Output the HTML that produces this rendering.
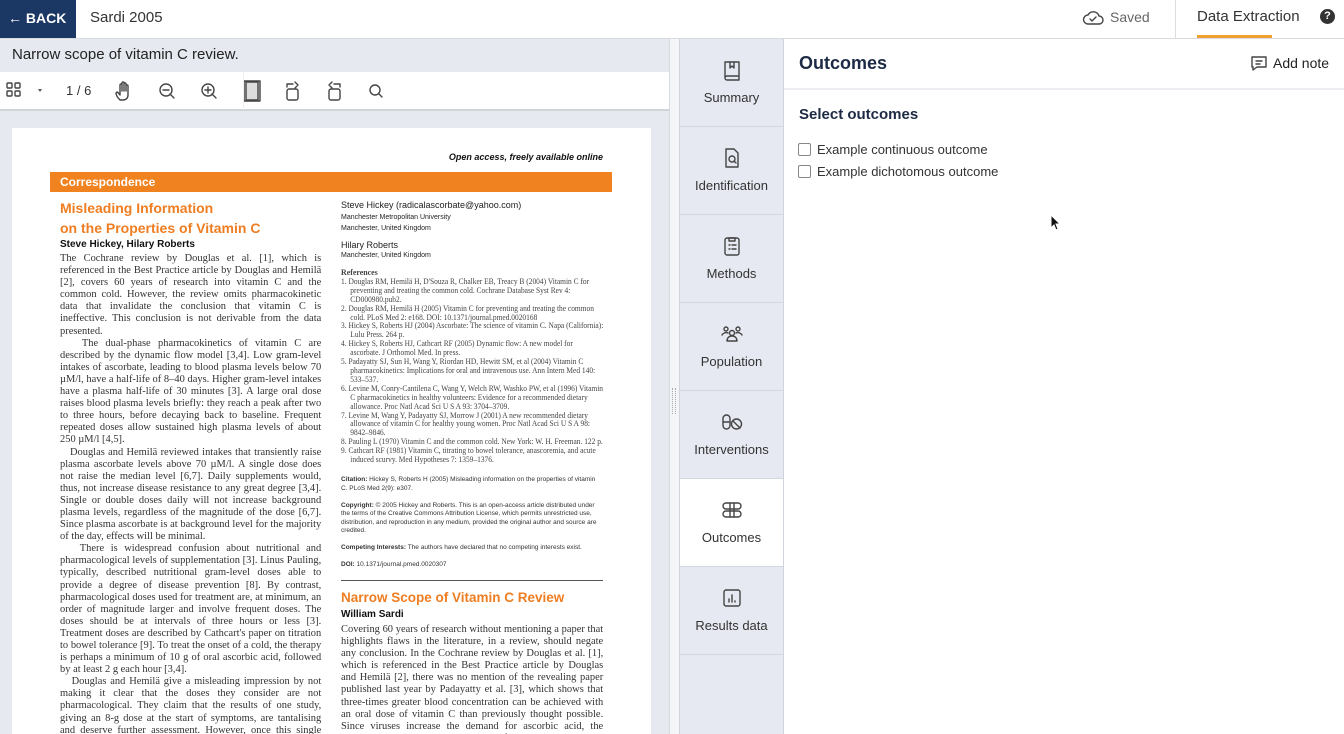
<!DOCTYPE html>
<html><head><meta charset="utf-8"><style>
*{box-sizing:border-box;margin:0;padding:0}
html,body{width:1344px;height:734px;overflow:hidden}
body{background:#fff;font-family:"Liberation Sans",sans-serif;position:relative;color:#222}
.abs{position:absolute}
#top{left:0;top:0;width:1344px;height:39px;border-bottom:1px solid #d8dbe0;background:#fff}
#back{left:0;top:0;width:76px;height:38px;background:#1b3763;color:#fff;font-weight:bold;font-size:14px;line-height:36px;padding-left:8px}
.ico{fill:none;stroke:#444;stroke-width:1.4;stroke-linecap:round;stroke-linejoin:round}
#left{left:0;top:39px;width:669px;height:695px;background:#e6e9f0}
#tb{left:0;top:72px;width:669px;height:39px;background:#fff;border-bottom:2px solid #d0d3d8}
#page{left:12px;top:128px;width:639px;height:606px;background:#fff;font-family:"Liberation Serif",serif;color:#333;overflow:hidden}
.body{font-size:11px;line-height:12.1px;text-align:justify;transform:scaleX(0.95);transform-origin:0 0}
.ref{font-size:8px;line-height:8.9px;color:#444;transform:scaleX(0.93);transform-origin:0 0}
.ref p{padding-left:10px;text-indent:-10px}
.h{color:#ef7d22;font-weight:bold;font-family:"Liberation Sans",sans-serif}
#side{left:679px;top:39px;width:105px;height:695px;background:#e6e9f1;border-left:1px solid #d0d4dc;border-right:1px solid #d0d4dc}
.it{position:absolute;left:0;width:103px;height:88px;border-bottom:1px solid #d3d7df;text-align:center;font-size:13px;color:#333}
.it svg{position:absolute;left:41px;top:20px}
.it span{position:absolute;left:0;right:0;top:51px}
</style></head><body>
<div id="top" class="abs"></div>
<div id="back" class="abs">&#8592; BACK</div>
<div class="abs" style="left:90px;top:9px;font-size:15px;color:#333">Sardi 2005</div>
<svg class="abs" style="left:1082px;top:9px" width="22" height="18" viewBox="0 0 22 18"><path class="ico" stroke="#888" d="M6 15h11a4 4 0 0 0 0-8 6 6 0 0 0-11-1 4.5 4.5 0 0 0 0 9z"/><path class="ico" stroke="#888" d="M8 10l2 2 4-4"/></svg>
<div class="abs" style="left:1110px;top:9px;font-size:14px;color:#666">Saved</div>
<div class="abs" style="left:1175px;top:0;width:1px;height:39px;background:#ddd"></div>
<div class="abs" style="left:1197px;top:8px;font-size:15px;color:#333">Data Extraction</div>
<div class="abs" style="left:1197px;top:35px;width:75px;height:3px;background:#f0a030"></div>
<div class="abs" style="left:1320px;top:9px;width:15px;height:15px;border-radius:50%;background:#333;color:#fff;font-size:11px;font-weight:bold;text-align:center;line-height:15px">?</div>

<div id="left" class="abs"></div>
<div class="abs" style="left:12px;top:46px;font-size:15px;color:#222">Narrow scope of vitamin C review.</div>
<div id="tb" class="abs">
<svg class="abs" style="left:6px;top:10px" width="40" height="18"><g class="ico" stroke="#777"><rect x="1" y="1" width="5" height="5" rx="1"/><rect x="9" y="1" width="5" height="5" rx="1"/><rect x="1" y="9" width="5" height="5" rx="1"/><rect x="9" y="9" width="5" height="5" rx="1"/></g><path d="M32 7l4 0-2 3z" fill="#555"/></svg>
<div class="abs" style="left:66px;top:11px;font-size:13px;color:#333">1 / 6</div>
<svg class="abs" style="left:114px;top:8px" width="300" height="24"><g class="ico" stroke="#555">
<path d="M6 20c-2-2-4-5-4-7l1-1c1 0 2 2 3 3V5a1 1 0 0 1 2 0v6V3a1 1 0 0 1 2 0v8V4a1 1 0 0 1 2 0v7V6a1 1 0 0 1 2 0v9c0 3-2 5-5 5z"/>
<circle cx="52" cy="10" r="6"/><path d="M56 14l4 4M49 10h6"/>
<circle cx="94" cy="10" r="6"/><path d="M98 14l4 4M91 10h6M94 7v6"/>
<rect x="130" y="1" width="16" height="20" fill="#ddd"/><rect x="132" y="2" width="12" height="18"/>
<rect x="173" y="9" width="11" height="11" rx="2"/><path d="M173 7V4h6M181 2l3 3-3 3"/>
<rect x="215" y="9" width="11" height="11" rx="2"/><path d="M226 7V4h-6M218 2l-3 3 3 3"/>
<circle cx="261" cy="10" r="5"/><path d="M265 14l3 3"/></g></svg>
</div>
<div class="abs" style="left:243px;top:72px;width:1px;height:38px;background:#eee"></div>

<div id="page" class="abs">
<div class="abs" style="right:48px;top:24px;font-size:9px;font-style:italic;font-weight:bold;font-family:'Liberation Sans',sans-serif;color:#111">Open access, freely available online</div>
<div class="abs" style="left:38px;top:44px;width:562px;height:20px;background:#f0821f;color:#fff;font-family:'Liberation Sans',sans-serif;font-weight:bold;font-size:12px;line-height:20px;padding-left:10px">Correspondence</div>
<div class="abs h" style="left:48px;top:70px;font-size:14px;line-height:20px">Misleading Information<br>on the Properties of Vitamin C</div>
<div class="abs" style="left:48px;top:111px;font-size:10px;font-weight:bold;font-family:'Liberation Sans',sans-serif;color:#111">Steve Hickey, Hilary Roberts</div>
<div class="abs body" style="left:48px;top:124px;width:275px">The Cochrane review by Douglas et al. [1], which is referenced in the Best Practice article by Douglas and Hemilä [2], covers 60 years of research into vitamin C and the common cold. However, the review omits pharmacokinetic data that invalidate the conclusion that vitamin C is ineffective. This conclusion is not derivable from the data presented.<br>&nbsp;&nbsp;&nbsp;The dual-phase pharmacokinetics of vitamin C are described by the dynamic flow model [3,4]. Low gram-level intakes of ascorbate, leading to blood plasma levels below 70 µM/l, have a half-life of 8–40 days. Higher gram-level intakes have a plasma half-life of 30 minutes [3]. A large oral dose raises blood plasma levels briefly: they reach a peak after two to three hours, before decaying back to baseline. Frequent repeated doses allow sustained high plasma levels of about 250 µM/l [4,5].<br>&nbsp;&nbsp;&nbsp;Douglas and Hemilä reviewed intakes that transiently raise plasma ascorbate levels above 70 µM/l. A single dose does not raise the median level [6,7]. Daily supplements would, thus, not increase disease resistance to any great degree [3,4]. Single or double doses daily will not increase background plasma levels, regardless of the magnitude of the dose [6,7]. Since plasma ascorbate is at background level for the majority of the day, effects will be minimal.<br>&nbsp;&nbsp;&nbsp;There is widespread confusion about nutritional and pharmacological levels of supplementation [3]. Linus Pauling, typically, described nutritional gram-level doses able to provide a degree of disease prevention [8]. By contrast, pharmacological doses used for treatment are, at minimum, an order of magnitude larger and involve frequent doses. The doses should be at intervals of three hours or less [3]. Treatment doses are described by Cathcart's paper on titration to bowel tolerance [9]. To treat the onset of a cold, the therapy is perhaps a minimum of 10 g of oral ascorbic acid, followed by at least 2 g each hour [3,4].<br>&nbsp;&nbsp;&nbsp;Douglas and Hemilä give a misleading impression by not making it clear that the doses they consider are not pharmacological. They claim that the results of one study, giving an 8-g dose at the start of symptoms, are tantalising and deserve further assessment. However, once this single dose</div>
<div class="abs" style="left:329px;top:72px;width:275px;font-family:'Liberation Sans',sans-serif;font-size:9px;color:#222">Steve Hickey (radicalascorbate@yahoo.com)</div>
<div class="abs" style="left:329px;top:84px;font-family:'Liberation Sans',sans-serif;font-size:7px;line-height:11px;color:#222">Manchester Metropolitan University<br>Manchester, United Kingdom</div>
<div class="abs" style="left:329px;top:112px;font-family:'Liberation Sans',sans-serif;font-size:9px;color:#222">Hilary Roberts</div>
<div class="abs" style="left:329px;top:124px;font-family:'Liberation Sans',sans-serif;font-size:7px;color:#222">Manchester, United Kingdom</div>
<div class="abs ref" style="left:329px;top:140px;width:282px"><b style="font-size:8.5px">References</b>
<p>1. Douglas RM, Hemilä H, D'Souza R, Chalker EB, Treacy B (2004) Vitamin C for preventing and treating the common cold. Cochrane Database Syst Rev 4: CD000980.pub2.</p>
<p>2. Douglas RM, Hemilä H (2005) Vitamin C for preventing and treating the common cold. PLoS Med 2: e168. DOI: 10.1371/journal.pmed.0020168</p>
<p>3. Hickey S, Roberts HJ (2004) Ascorbate: The science of vitamin C. Napa (California): Lulu Press. 264 p.</p>
<p>4. Hickey S, Roberts HJ, Cathcart RF (2005) Dynamic flow: A new model for ascorbate. J Orthomol Med. In press.</p>
<p>5. Padayatty SJ, Sun H, Wang Y, Riordan HD, Hewitt SM, et al (2004) Vitamin C pharmacokinetics: Implications for oral and intravenous use. Ann Intern Med 140: 533–537.</p>
<p>6. Levine M, Conry-Cantilena C, Wang Y, Welch RW, Washko PW, et al (1996) Vitamin C pharmacokinetics in healthy volunteers: Evidence for a recommended dietary allowance. Proc Natl Acad Sci U S A 93: 3704–3709.</p>
<p>7. Levine M, Wang Y, Padayatty SJ, Morrow J (2001) A new recommended dietary allowance of vitamin C for healthy young women. Proc Natl Acad Sci U S A 98: 9842–9846.</p>
<p>8. Pauling L (1970) Vitamin C and the common cold. New York: W. H. Freeman. 122 p.</p>
<p>9. Cathcart RF (1981) Vitamin C, titrating to bowel tolerance, anascoremia, and acute induced scurvy. Med Hypotheses 7: 1359–1376.</p></div>
<div class="abs" style="left:329px;top:348px;width:262px;font-family:'Liberation Sans',sans-serif;font-size:6.5px;line-height:8.5px;color:#333"><b>Citation:</b> Hickey S, Roberts H (2005) Misleading information on the properties of vitamin C. PLoS Med 2(9): e307.<br><br><b>Copyright:</b> © 2005 Hickey and Roberts. This is an open-access article distributed under the terms of the Creative Commons Attribution License, which permits unrestricted use, distribution, and reproduction in any medium, provided the original author and source are credited.<br><br><b>Competing Interests:</b> The authors have declared that no competing interests exist.<br><br><b>DOI:</b> 10.1371/journal.pmed.0020307</div>
<div class="abs" style="left:329px;top:452px;width:262px;height:1px;background:#555"></div>
<div class="abs h" style="left:329px;top:462px;font-size:13.5px">Narrow Scope of Vitamin C Review</div>
<div class="abs" style="left:329px;top:481px;font-size:10px;font-weight:bold;font-family:'Liberation Sans',sans-serif;color:#111">William Sardi</div>
<div class="abs body" style="left:329px;top:495px;width:276px">Covering 60 years of research without mentioning a paper that highlights flaws in the literature, in a review, should negate any conclusion. In the Cochrane review by Douglas et al. [1], which is referenced in the Best Practice article by Douglas and Hemilä [2], there was no mention of the revealing paper published last year by Padayatty et al. [3], which shows that three-times greater blood concentration can be achieved with an oral dose of vitamin C than previously thought possible. Since viruses increase the demand for ascorbic acid, the ability to achieve higher blood levels of vitamin C</div>
</div>
<div class="abs" style="left:669px;top:39px;width:10px;height:695px;background:#f4f5f8;border-left:1px solid #d6d9de"></div>
<div class="abs" style="left:672px;top:388px;width:4px;height:26px;border-left:1px dotted #aaa;border-right:1px dotted #aaa"></div>

<div id="side" class="abs">
<div class="it" style="top:0"><svg width="22" height="22" viewBox="0 0 22 22"><g class="ico"><path d="M4 3h14v14H6a2 2 0 0 0 0 4h12v-4M4 3v16"/><path d="M9 3v6l2-2 2 2V3"/></g></svg><span>Summary</span></div>
<div class="it" style="top:88px"><svg width="22" height="22" viewBox="0 0 22 22"><g class="ico"><path d="M5 2h8l4 4v14H5z"/><circle cx="11" cy="12" r="3"/><path d="M13 14l2 2"/></g></svg><span>Identification</span></div>
<div class="it" style="top:176px"><svg width="22" height="22" viewBox="0 0 22 22"><g class="ico"><rect x="4" y="3" width="14" height="17" rx="2"/><path d="M8 3h6v3H8zM8 10h1M11 10h4M8 14h1M11 14h4"/></g></svg><span>Methods</span></div>
<div class="it" style="top:264px"><svg width="22" height="22" viewBox="0 0 22 22"><g class="ico"><circle cx="5" cy="6" r="2"/><circle cx="17" cy="6" r="2"/><circle cx="11" cy="10" r="2.5"/><path d="M1 12c1-2 4-3 6-2M21 12c-1-2-4-3-6-2M6 18c0-3 2-5 5-5s5 2 5 5z"/></g></svg><span>Population</span></div>
<div class="it" style="top:352px"><svg width="22" height="22" viewBox="0 0 22 22"><g class="ico"><rect x="2" y="4" width="7" height="14" rx="3.5"/><path d="M2 11h7"/><circle cx="15.5" cy="13" r="5"/><path d="M12 10l7 7"/></g></svg><span>Interventions</span></div>
<div class="it" style="top:440px;background:#fff"><svg width="22" height="22" viewBox="0 0 22 22"><g class="ico"><rect x="2" y="4" width="18" height="6" rx="3"/><rect x="2" y="12" width="18" height="6" rx="3"/><path d="M9 4v14M13 4v14"/></g></svg><span>Outcomes</span></div>
<div class="it" style="top:528px"><svg width="22" height="22" viewBox="0 0 22 22"><g class="ico"><rect x="3" y="3" width="16" height="16" rx="2"/><path d="M8 15v-3M11 15V8M14 15v-1"/></g></svg><span>Results data</span></div>
</div>

<div class="abs" style="left:784px;top:39px;width:560px;height:51px;border-bottom:2px solid #eceef1"></div>
<div class="abs" style="left:799px;top:53px;font-size:18px;font-weight:bold;color:#1c2a44">Outcomes</div>
<svg class="abs" style="left:1250px;top:55px" width="18" height="18" viewBox="0 0 18 18"><g class="ico"><path d="M2 2h14v10H7l-4 3v-3H2z"/><path d="M6 6h6M6 9h4"/></g></svg>
<div class="abs" style="left:1273px;top:55px;font-size:14px;color:#222">Add note</div>
<div class="abs" style="left:799px;top:106px;font-size:15px;font-weight:bold;color:#1c2a44">Select outcomes</div>
<div class="abs" style="left:798px;top:143px;width:13px;height:13px;border:1px solid #888;border-radius:2px"></div>
<div class="abs" style="left:817px;top:142px;font-size:13px;color:#333">Example continuous outcome</div>
<div class="abs" style="left:798px;top:165px;width:13px;height:13px;border:1px solid #888;border-radius:2px"></div>
<div class="abs" style="left:817px;top:164px;font-size:13px;color:#333">Example dichotomous outcome</div>
<svg class="abs" style="left:1050px;top:214px" width="12" height="18"><path d="M1 1v13l3-3 2 5 2-1-2-5h4z" fill="#111" stroke="#fff" stroke-width="1"/></svg>
</body></html>
